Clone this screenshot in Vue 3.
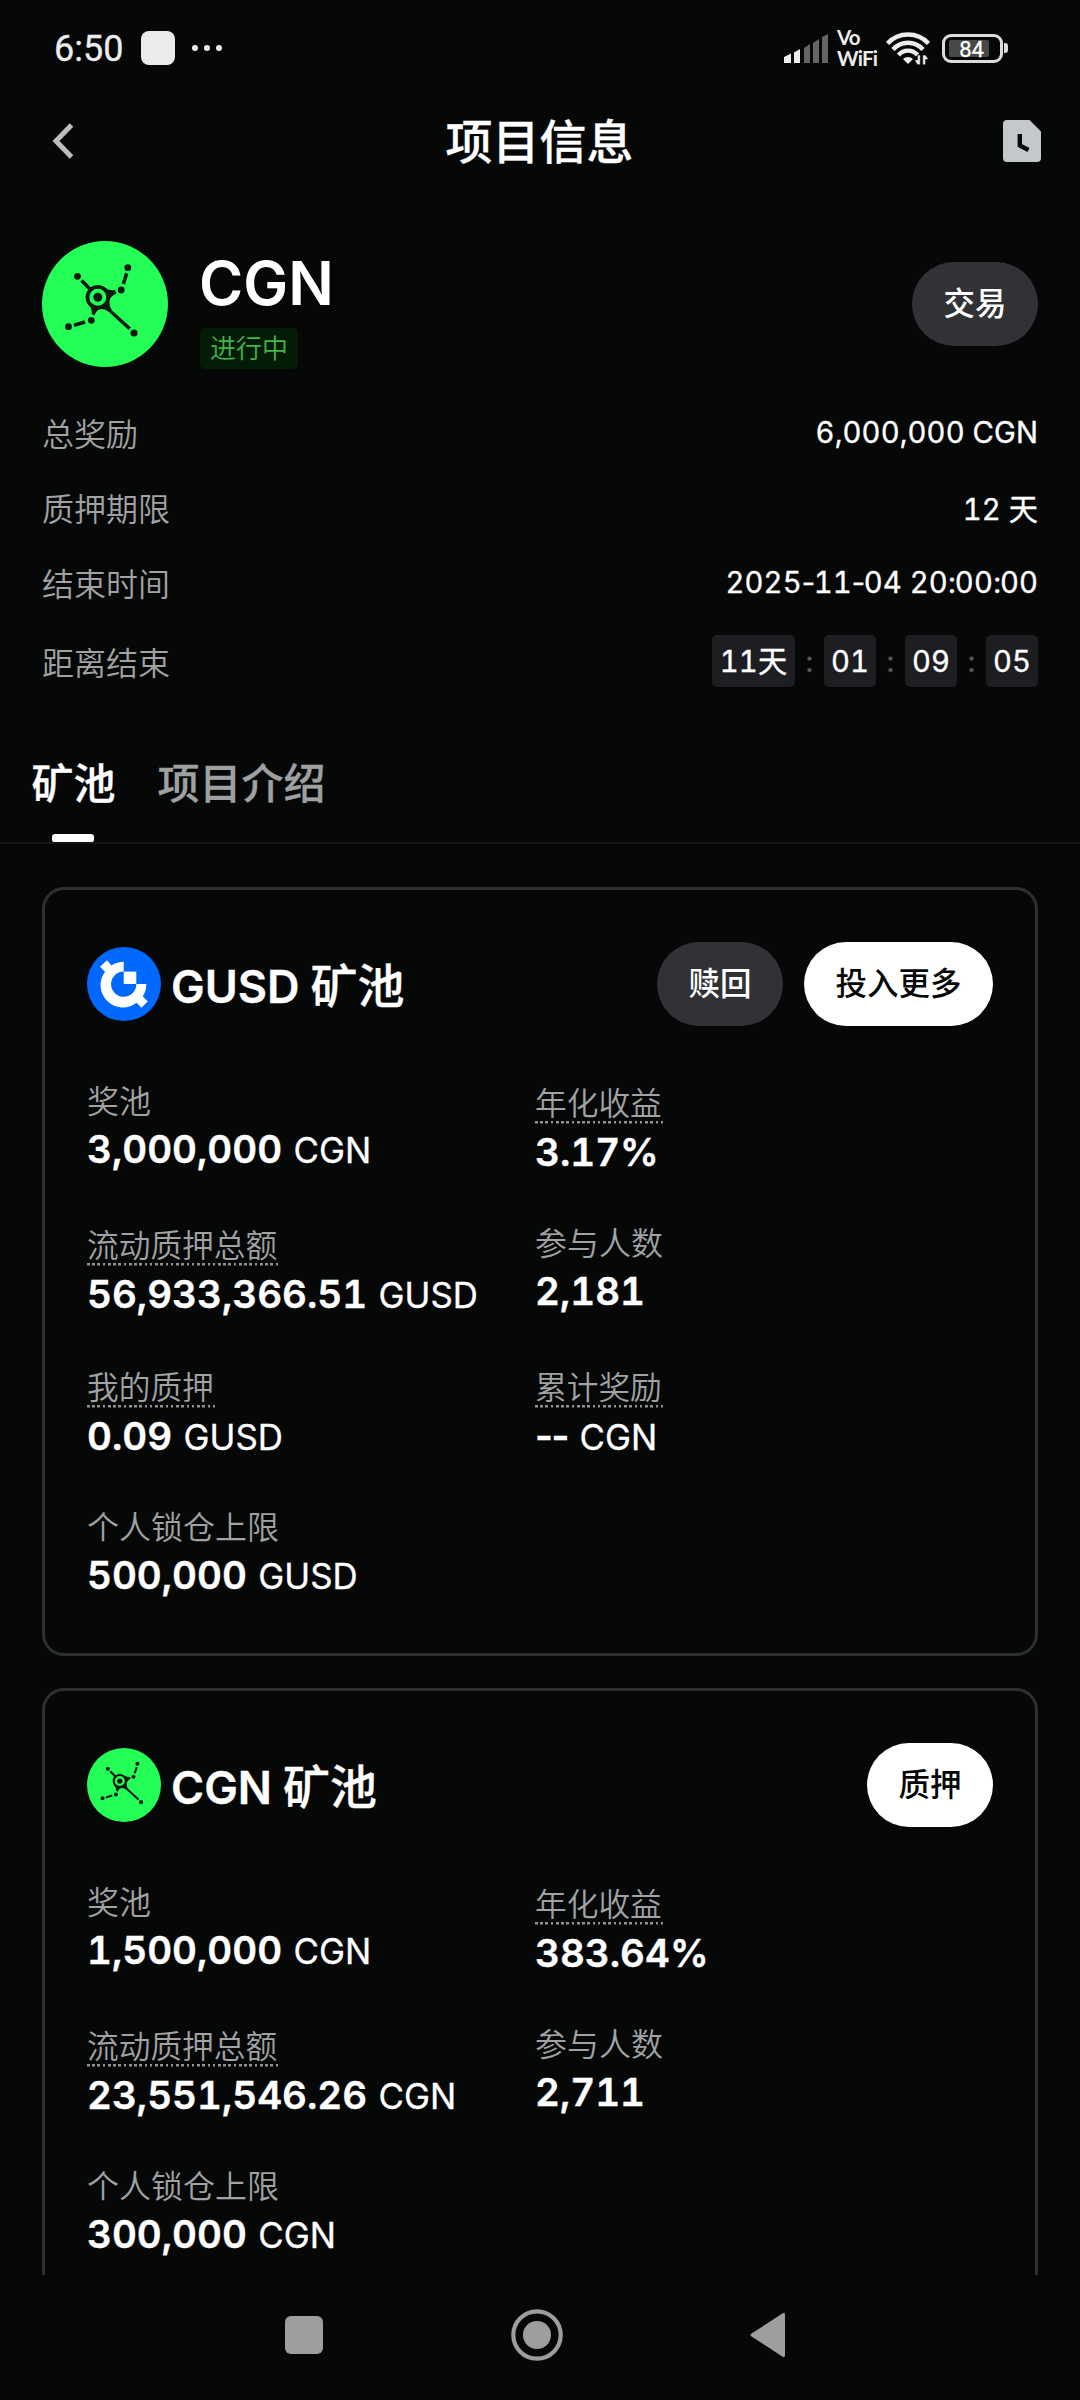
<script setup>
const details = [
  { label: '总奖励', value: '6,000,000 CGN' },
  { label: '质押期限', value: '12 天' },
  { label: '结束时间', value: '2025-11-04 20:00:00' },
]

const countdown = ['11天', '01', '09', '05']

const tabs = [
  { name: '矿池', active: true },
  { name: '项目介绍', active: false },
]

const pools = [
  {
    name: 'GUSD',
    icon: 'gusd',
    actions: [
      { text: '赎回', kind: 'dark' },
      { text: '投入更多', kind: 'light' },
    ],
    stats: [
      { label: '奖池', num: '3,000,000', unit: 'CGN' },
      { label: '年化收益', num: '3.17%', hint: true },
      { label: '流动质押总额', num: '56,933,366.51', unit: 'GUSD', hint: true },
      { label: '参与人数', num: '2,181' },
      { label: '我的质押', num: '0.09', unit: 'GUSD', hint: true },
      { label: '累计奖励', num: '--', unit: 'CGN', hint: true },
      { label: '个人锁仓上限', num: '500,000', unit: 'GUSD' },
    ],
  },
  {
    name: 'CGN',
    icon: 'cgn',
    actions: [{ text: '质押', kind: 'light' }],
    stats: [
      { label: '奖池', num: '1,500,000', unit: 'CGN' },
      { label: '年化收益', num: '383.64%', hint: true },
      { label: '流动质押总额', num: '23,551,546.26', unit: 'CGN', hint: true },
      { label: '参与人数', num: '2,711' },
      { label: '个人锁仓上限', num: '300,000', unit: 'CGN' },
    ],
  },
]

// Digits use tabular figures; punctuation keeps its proportional width.
const segments = (text) =>
  text.split(/([-:]+)/).filter(Boolean).map((t) => ({ t, punct: /^[-:]/.test(t) }))
</script>

<template>
  <div class="screen">
    <svg class="defs" width="0" height="0" aria-hidden="true">
      <symbol id="coin-cgn" viewBox="0 0 126 126">
        <circle cx="63" cy="63" r="63" fill="#24ff57" />
        <g fill="#0c1a10" stroke="none">
          <circle cx="35.5" cy="35.3" r="3.4" />
          <circle cx="85.8" cy="26.7" r="3.4" />
          <circle cx="79.2" cy="49" r="3.4" />
          <circle cx="49.3" cy="79.3" r="3.4" />
          <circle cx="26.5" cy="85.7" r="3.4" />
          <circle cx="92" cy="92" r="3.6" />
          <circle cx="55.8" cy="56.3" r="12.2" />
          <path d="M63 47Q68 50 73 49L74.5 52.5Q69 55 67.5 59Q67 65 70 69.5L89 86.5L86.5 89L67 71Q62 67 57 68.5Q54 70 52.5 74.5L49.5 73Q50.5 68 46.5 63Z" />
        </g>
        <g fill="none" stroke="#0c1a10" stroke-width="3.6">
          <path d="M39.5 39.5L49 49M84.7 32.3L81.3 43M32 84.2L43 81" />
        </g>
        <circle cx="55.8" cy="56.3" r="6.5" fill="#0c1a10" stroke="#24ff57" stroke-width="4" />
      </symbol>
      <symbol id="coin-gusd" viewBox="0 0 74 74">
        <circle cx="37" cy="37" r="37" fill="#0068ff" />
        <path
          fill="#fff"
          d="M36.7 14.8A22.3 22.3 0 0 0 24.5 18.5L20 13.2L13 19.8L18 24.8A22.3 22.3 0 0 0 49.5 55.8L54.4 60.8L60.8 54.2L55.8 49.4A22.3 22.3 0 0 0 59.3 37H49.3A12.6 12.6 0 1 1 36.7 24.6Z"
        />
        <path fill="#fff" d="M36.7 24.6H49.3V37H36.7Z" />
      </symbol>
    </svg>

    <header class="status">
      <div class="status-left">
        <span class="clock">6:50</span>
        <i class="notice"></i>
        <i class="dots"><b></b><b></b><b></b></i>
      </div>
      <div class="status-right">
        <svg class="signal" width="45" height="30" viewBox="0 0 45 30">
          <path fill="#ededed" d="M0 24L7 20.5V30H0ZM10 19.5L16 16V30H10Z" />
          <path fill="#636463" d="M20 15L26 11V30H20ZM29 10L35 6V30H29ZM38 4L44 1V30H38Z" />
        </svg>
        <div class="vowifi"><span>Vo</span><span>WiFi</span></div>
        <svg class="wifi" width="44" height="34" viewBox="0 0 44 34">
          <g fill="none" stroke="#ededed" stroke-width="4.4">
            <path d="M1.5 12.5A28 28 0 0 1 42.5 12.5" />
            <path d="M7 18.5A20 20 0 0 1 37 18.5" />
            <path d="M12.5 24A12.5 12.5 0 0 1 31.5 24" />
          </g>
          <path fill="#ededed" d="M17 28A7 7 0 0 1 27 28L22 33Z" />
          <path fill="#ededed" stroke="#060808" stroke-width="0.6" d="M34.3 24V33.7H31.4L28.4 29H31.4V24ZM36.7 33.7V24H39.6L42.6 28.5H39.6V33.7Z" />
        </svg>
        <div class="battery"><i></i><span>84</span></div>
        <i class="nub"></i>
      </div>
    </header>

    <nav class="topbar">
      <svg width="24" height="38" viewBox="0 0 24 38">
        <path d="M20.5 3L5 19L20.5 35" fill="none" stroke="#bdbebe" stroke-width="5" />
      </svg>
      <h1>项目信息</h1>
      <svg width="38" height="42" viewBox="0 0 38 42">
        <path fill="#c4c8ca" d="M4 0H26.5L38 11.5V38Q38 42 34 42H4Q0 42 0 38V4Q0 0 4 0Z" />
        <path d="M16.8 14V25.5L25.5 30" fill="none" stroke="#070909" stroke-width="4.4" />
      </svg>
    </nav>

    <section class="project">
      <svg class="logo"><use href="#coin-cgn" /></svg>
      <div class="ident">
        <h2>CGN</h2>
        <span class="badge">进行中</span>
      </div>
      <button class="pill dark">交易</button>
    </section>

    <dl class="details">
      <div v-for="d in details" :key="d.label" class="detail">
        <dt>{{ d.label }}</dt>
        <dd><span v-for="(s, i) in segments(d.value)" :key="i" :class="{ punct: s.punct }">{{ s.t }}</span></dd>
      </div>
      <div class="detail last">
        <dt>距离结束</dt>
        <dd class="countdown">
          <template v-for="(c, i) in countdown" :key="i">
            <em v-if="i">:</em>
            <span>{{ c }}</span>
          </template>
        </dd>
      </div>
    </dl>

    <div class="tabs">
      <div v-for="t in tabs" :key="t.name" class="tab" :class="{ active: t.active }">{{ t.name }}</div>
    </div>

    <main class="pools">
      <article v-for="p in pools" :key="p.name" class="card">
        <div class="card-head">
          <svg class="coin"><use :href="'#coin-' + p.icon" /></svg>
          <h3><span>{{ p.name }}</span>矿池</h3>
          <button v-for="a in p.actions" :key="a.text" class="pill" :class="a.kind">{{ a.text }}</button>
        </div>
        <div class="stats">
          <div v-for="s in p.stats" :key="s.label" class="stat">
            <div class="label" :class="{ hint: s.hint }">{{ s.label }}</div>
            <div class="value">
              <strong :class="{ punct: s.num === '--' }">{{ s.num }}</strong><span v-if="s.unit">{{ s.unit }}</span>
            </div>
          </div>
        </div>
      </article>
    </main>

    <footer class="navbar">
      <svg width="38" height="38"><rect width="38" height="38" rx="6" fill="#9e9e9e" /></svg>
      <svg width="52" height="52" viewBox="0 0 52 52">
        <circle cx="26" cy="26" r="23.7" fill="none" stroke="#9e9e9e" stroke-width="4.2" />
        <circle cx="26" cy="26" r="14" fill="#9e9e9e" />
      </svg>
      <svg width="36" height="44" viewBox="0 0 36 44">
        <path d="M33.5 1.5V42.5L2 22Z" fill="#9e9e9e" stroke="#9e9e9e" stroke-width="3" stroke-linejoin="round" />
      </svg>
    </footer>
  </div>
</template>

<style>
body {
  background: #060808;
}
</style>

<style scoped>
.screen {
  width: 1080px;
  height: 2400px;
  overflow: hidden;
  display: flex;
  flex-direction: column;
  background: #060808;
  color: #fff;
  font-family: Inter, "Noto Sans CJK SC", sans-serif;
  font-variant-numeric: tabular-nums;
}
.defs {
  position: absolute;
}
h1, h2, h3, dl, dd {
  margin: 0;
}
i, em {
  font-style: normal;
}
.punct {
  font-variant-numeric: normal;
  letter-spacing: -1.4px;
}

.status {
  flex: none;
  height: 96px;
  display: flex;
  justify-content: space-between;
  padding: 0 72px 0 54px;
}
.status-left, .status-right {
  display: flex;
  align-items: center;
  height: 96px;
}
.clock {
  width: 87px;
  font: 400 36px/42px Roboto, sans-serif;
  color: #ededed;
  -webkit-text-stroke: 0.3px #ededed;
  padding-top: 2px;
  box-sizing: border-box;
}
.notice {
  width: 34px;
  height: 34px;
  border-radius: 8px;
  background: #ebebeb;
}
.dots {
  display: flex;
  gap: 6px;
  margin-left: 17px;
}
.dots b {
  width: 6px;
  height: 6px;
  border-radius: 3px;
  background: #ededed;
}
.signal {
  margin-top: -1px;
}
.vowifi {
  width: 49px;
  margin-left: 8px;
  display: flex;
  flex-direction: column;
  font: 700 20.5px/21px Lato, sans-serif;
  letter-spacing: -0.8px;
  color: #ededed;
}
.wifi {
  margin-right: 12px;
}
.battery {
  position: relative;
  box-sizing: border-box;
  width: 61px;
  height: 29px;
  border: 3px solid #dcdcdc;
  border-radius: 9px;
  text-align: center;
}
.battery i {
  position: absolute;
  left: 4px;
  top: 3px;
  width: 40px;
  height: 17px;
  background: #474848;
  border-radius: 2px;
}
.battery span {
  position: relative;
  display: block;
  margin-left: -2px;
  font: 400 22px/26px Roboto, sans-serif;
  -webkit-text-stroke: 0.3px #fff;
}
.nub {
  width: 4px;
  height: 10px;
  margin-left: 1px;
  border-radius: 0 3px 3px 0;
  background: #dcdcdc;
}

.topbar {
  flex: none;
  height: 90px;
  margin-bottom: 2px;
  display: flex;
  align-items: center;
  justify-content: space-between;
  padding: 0 39px 0 51px;
}
.topbar h1 {
  font-size: 47px;
  line-height: 92px;
  padding-top: 2px;
  font-weight: 500;
  -webkit-text-stroke: 0.3px currentColor;
  margin-left: 1px;
}

.project {
  flex: none;
  height: 126px;
  margin-top: 53px;
  padding: 0 42px;
  display: flex;
  align-items: center;
}
.logo {
  width: 126px;
  height: 126px;
}
.ident {
  flex: 1;
  height: 126px;
  padding-left: 32px;
  display: flex;
  flex-direction: column;
  align-items: flex-start;
}
.ident h2 {
  font-size: 60px;
  line-height: 84px;
  font-weight: 600;
  margin: 0 0 3px -1px;
}
.badge {
  box-sizing: border-box;
  height: 42px;
  padding: 0 10px;
  border-radius: 5px;
  background: #041b06;
  color: #3fb54a;
  font-size: 26px;
  line-height: 41px;
  font-weight: 350;
}
.pill {
  flex: none;
  height: 84px;
  padding: 0 31.5px;
  border: 0;
  border-radius: 42px;
  font: 500 31.5px/84px Inter, "Noto Sans CJK SC", sans-serif;
}
.pill.dark {
  background: #313235;
  color: #fff;
}
.pill.light {
  background: #fff;
  color: #060808;
}

.details {
  flex: none;
  margin-top: 27px;
  padding: 0 42px;
}
.detail {
  height: 75px;
  display: flex;
  align-items: center;
  justify-content: space-between;
}
.detail.last {
  height: 84px;
}
dt {
  font-size: 32px;
  font-weight: 350;
  color: #a0a2a3;
}
dd {
  padding-top: 1px;
  font-size: 29.2px;
  font-weight: 400;
  letter-spacing: 0.1px;
  -webkit-text-stroke: 0.35px currentColor;
}
.countdown {
  padding-top: 0;
  display: flex;
  align-items: center;
}
.countdown span {
  height: 52px;
  width: 52px;
  border-radius: 5px;
  background: #1d1e21;
  text-align: center;
  line-height: 54px;
}
.countdown span:first-child {
  width: 83px;
}
.countdown em {
  width: 29px;
  text-align: center;
  color: #58595a;
}

.tabs {
  flex: none;
  box-sizing: border-box;
  height: 106px;
  margin-top: 35px;
  padding: 0 31.5px;
  display: flex;
  gap: 42px;
  border-bottom: 2px solid #151717;
}
.tab {
  position: relative;
  font-size: 42px;
  line-height: 92px;
  font-weight: 500;
  -webkit-text-stroke: 0.3px currentColor;
  color: #9ea0a1;
}
.tab.active {
  color: #fff;
}
.tab.active::after {
  content: "";
  position: absolute;
  left: 20.5px;
  bottom: 0;
  width: 42px;
  height: 8px;
  border-radius: 3px 3px 2px 2px;
  background: #fff;
}

.pools {
  flex: 1;
  min-height: 0;
  overflow: hidden;
  padding: 43px 42px 0;
}
.card {
  box-sizing: border-box;
  height: 769px;
  margin-bottom: 32px;
  border: 3px solid #2e3030;
  border-radius: 22px;
  padding: 52px 42px 0;
}
.card-head {
  height: 84px;
  display: flex;
  align-items: center;
}
.coin {
  width: 74px;
  height: 74px;
}
.card-head h3 {
  flex: 1;
  padding: 4px 0 0 10px;
  font-size: 47px;
  line-height: 84px;
  font-weight: 500;
  -webkit-text-stroke: 0.3px currentColor;
}
.card-head h3 span {
  font-size: 45px;
  font-weight: 600;
  margin-right: 11px;
}
.card-head .pill + .pill {
  margin-left: 21px;
}
.stats {
  margin-top: 54px;
  display: grid;
  grid-template-columns: 448px 1fr;
  grid-auto-rows: 142px;
}
.label {
  width: max-content;
  height: 42px;
  font-size: 32px;
  line-height: 43px;
  font-weight: 350;
  color: #a0a2a3;
}
.label.hint {
  font-size: 31.7px;
  height: 45px;
  line-height: 47px;
  padding-right: 1px;
  background: repeating-linear-gradient(90deg, #8f9192 0 2.6px, transparent 2.6px 5.24px) 0 calc(100% - 1.5px) / 100% 2.5px no-repeat;
}
.value {
  display: flex;
  align-items: baseline;
  line-height: 54px;
  white-space: nowrap;
}
.value strong {
  font-size: 38.5px;
  font-weight: 600;
  -webkit-text-stroke: 0.4px currentColor;
}
.value span {
  font-size: 34.8px;
  -webkit-text-stroke: 0.3px currentColor;
  margin-left: 11.5px;
}

.navbar {
  flex: none;
  height: 125px;
  display: flex;
  align-items: center;
  padding: 0 0 5px 285px;
  box-sizing: border-box;
}
.navbar svg:nth-child(2) {
  margin-left: 188px;
}
.navbar svg:nth-child(3) {
  margin-left: 187px;
}
</style>
